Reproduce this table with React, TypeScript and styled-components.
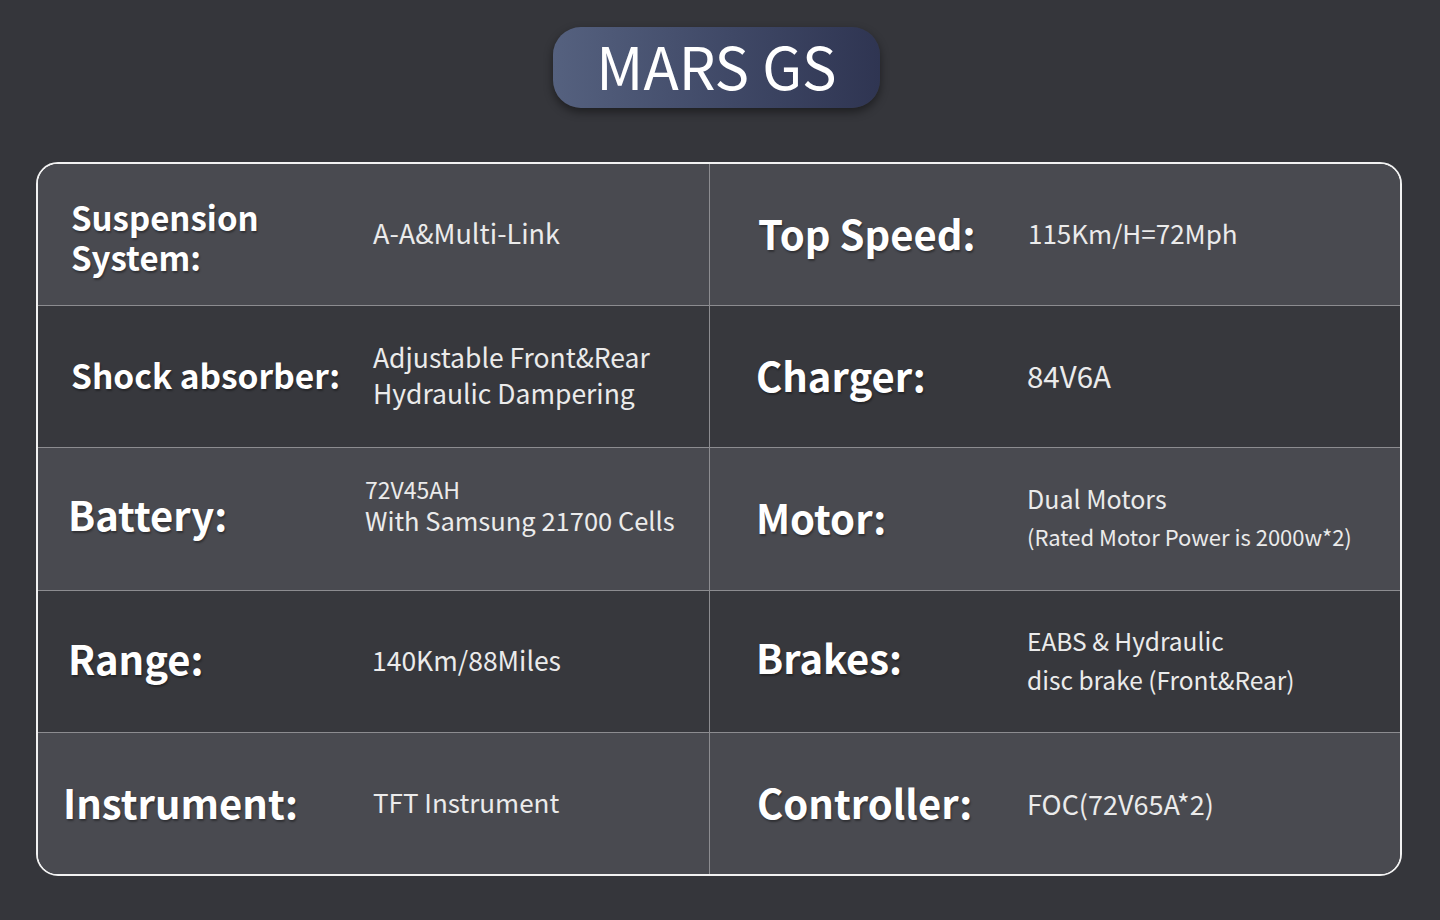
import styled, { createGlobalStyle } from 'styled-components';

const GlobalStyle = createGlobalStyle`
  body {
    margin: 0;
    background: #35363b;
    font-family: 'Noto Sans CJK SC', 'Noto Sans', sans-serif;
  }
`;

const Page = styled.div`
  width: 1440px;
  height: 920px;
  display: flex;
  flex-direction: column;
  align-items: flex-start;
  overflow: hidden;
`;

const TitlePill = styled.div`
  align-self: center;
  margin: 27px 0 0 -7px;
  width: 327px;
  height: 81px;
  box-sizing: border-box;
  padding-bottom: 6px;
  border-radius: 28px;
  background: linear-gradient(90deg, #55617f 0%, #3f4866 55%, #2f3552 100%);
  box-shadow: 0 4px 10px rgba(0, 0, 0, 0.45);
  display: flex;
  align-items: center;
  justify-content: center;
  color: #ffffff;
  font-size: 58px;
  font-weight: 400;
`;

const Table = styled.div`
  margin: 54px 0 0 36px;
  width: 1366px;
  box-sizing: border-box;
  border: 2px solid #f2f2f2;
  border-radius: 22px;
  overflow: hidden;
  display: flex;
  flex-direction: column;
`;

const Row = styled.div<{ $light: boolean }>`
  display: grid;
  grid-template-columns: 671px 1fr;
  height: 141.2px;
  background: ${(p) => (p.$light ? '#494a50' : '#37383d')};
  & + & {
    border-top: 1px solid #8c8c90;
  }
`;

const Cell = styled.div<{ $labelWidth: number; $pad: number }>`
  display: grid;
  grid-template-columns: ${(p) => p.$labelWidth}px 1fr;
  align-items: center;
  padding-left: ${(p) => p.$pad}px;
  padding-bottom: 3px;
  & + & {
    border-left: 1px solid #8c8c90;
  }
`;

const Label = styled.div<{ $size: number; $shift?: number; $drop?: number }>`
  color: #ffffff;
  font-weight: 700;
  font-size: ${(p) => p.$size}px;
  line-height: 40px;
  margin-left: ${(p) => p.$shift ?? 0}px;
  transform: translateY(${(p) => p.$drop ?? 0}px);
  text-shadow: 1px 2px 2px rgba(0, 0, 0, 0.35);
`;

const Value = styled.div<{ $shift?: number; $drop?: number }>`
  color: #ebebeb;
  margin-left: ${(p) => p.$shift ?? 0}px;
  transform: translateY(${(p) => p.$drop ?? 0}px);
`;

const Line = styled.div<{ $size?: number; $height?: number }>`
  font-size: ${(p) => p.$size ?? 26}px;
  line-height: ${(p) => p.$height ?? 36}px;
  white-space: nowrap;
`;

type Spec = {
  label: string;
  size: number;
  shift?: number;
  labelDrop?: number;
  valueShift?: number;
  valueDrop?: number;
  lines: { text: string; size?: number; height?: number }[];
};

const rows: [Spec, Spec][] = [
  [
    {
      label: 'Suspension\nSystem:',
      size: 33,
      labelDrop: 4,
      lines: [{ text: 'A-A&Multi-Link', size: 27 }],
    },
    { label: 'Top Speed:', size: 40, lines: [{ text: '115Km/H=72Mph' }] },
  ],
  [
    {
      label: 'Shock absorber:',
      size: 33.5,
      lines: [
        { text: 'Adjustable Front&Rear', size: 26.5 },
        { text: 'Hydraulic Dampering', size: 26.5 },
      ],
    },
    { label: 'Charger:', size: 40, shift: -2, lines: [{ text: '84V6A', size: 29.5 }], valueShift: -1 },
  ],
  [
    {
      label: 'Battery:',
      size: 40,
      shift: -3,
      labelDrop: -3,
      valueShift: -8,
      valueDrop: -13,
      lines: [
        { text: '72V45AH', size: 23, height: 30 },
        { text: 'With Samsung 21700 Cells', size: 25.5, height: 31 },
      ],
    },
    {
      label: 'Motor:',
      size: 40,
      shift: -2,
      valueShift: -1,
      lines: [
        { text: 'Dual Motors', size: 25, height: 38 },
        { text: '(Rated Motor Power is 2000w*2)', size: 22, height: 38 },
      ],
    },
  ],
  [
    { label: 'Range:', size: 40, shift: -3, labelDrop: -2, lines: [{ text: '140Km/88Miles', size: 26.5 }], valueShift: -1 },
    {
      label: 'Brakes:',
      size: 40,
      shift: -2,
      labelDrop: -3,
      valueShift: -1,
      lines: [
        { text: 'EABS & Hydraulic', size: 24.5, height: 39 },
        { text: 'disc brake (Front&Rear)', size: 24.5, height: 39 },
      ],
    },
  ],
  [
    { label: 'Instrument:', size: 40, shift: -8, lines: [{ text: 'TFT Instrument', size: 26 }], valueShift: 0 },
    {
      label: 'Controller:',
      size: 40,
      shift: -1,
      valueShift: -1,
      valueDrop: 2,
      lines: [{ text: 'FOC(72V65A*2)', size: 27 }],
    },
  ],
];

const SpecCell = ({ spec, labelWidth, pad }: { spec: Spec; labelWidth: number; pad: number }) => (
  <Cell $labelWidth={labelWidth} $pad={pad}>
    <Label $size={spec.size} $shift={spec.shift} $drop={spec.labelDrop}>
      {spec.label.split('\n').map((t) => (
        <div key={t}>{t}</div>
      ))}
    </Label>
    <Value $shift={spec.valueShift} $drop={spec.valueDrop}>
      {spec.lines.map((l) => (
        <Line key={l.text} $size={l.size} $height={l.height}>
          {l.text}
        </Line>
      ))}
    </Value>
  </Cell>
);

const App = () => {
  return (
    <Page>
      <GlobalStyle />
      <TitlePill>MARS GS</TitlePill>
      <Table>
        {rows.map(([left, right], i) => (
          <Row key={left.label} $light={i % 2 === 0}>
            <SpecCell spec={left} labelWidth={302} pad={33} />
            <SpecCell spec={right} labelWidth={270} pad={48} />
          </Row>
        ))}
      </Table>
    </Page>
  );
};

export default App;
